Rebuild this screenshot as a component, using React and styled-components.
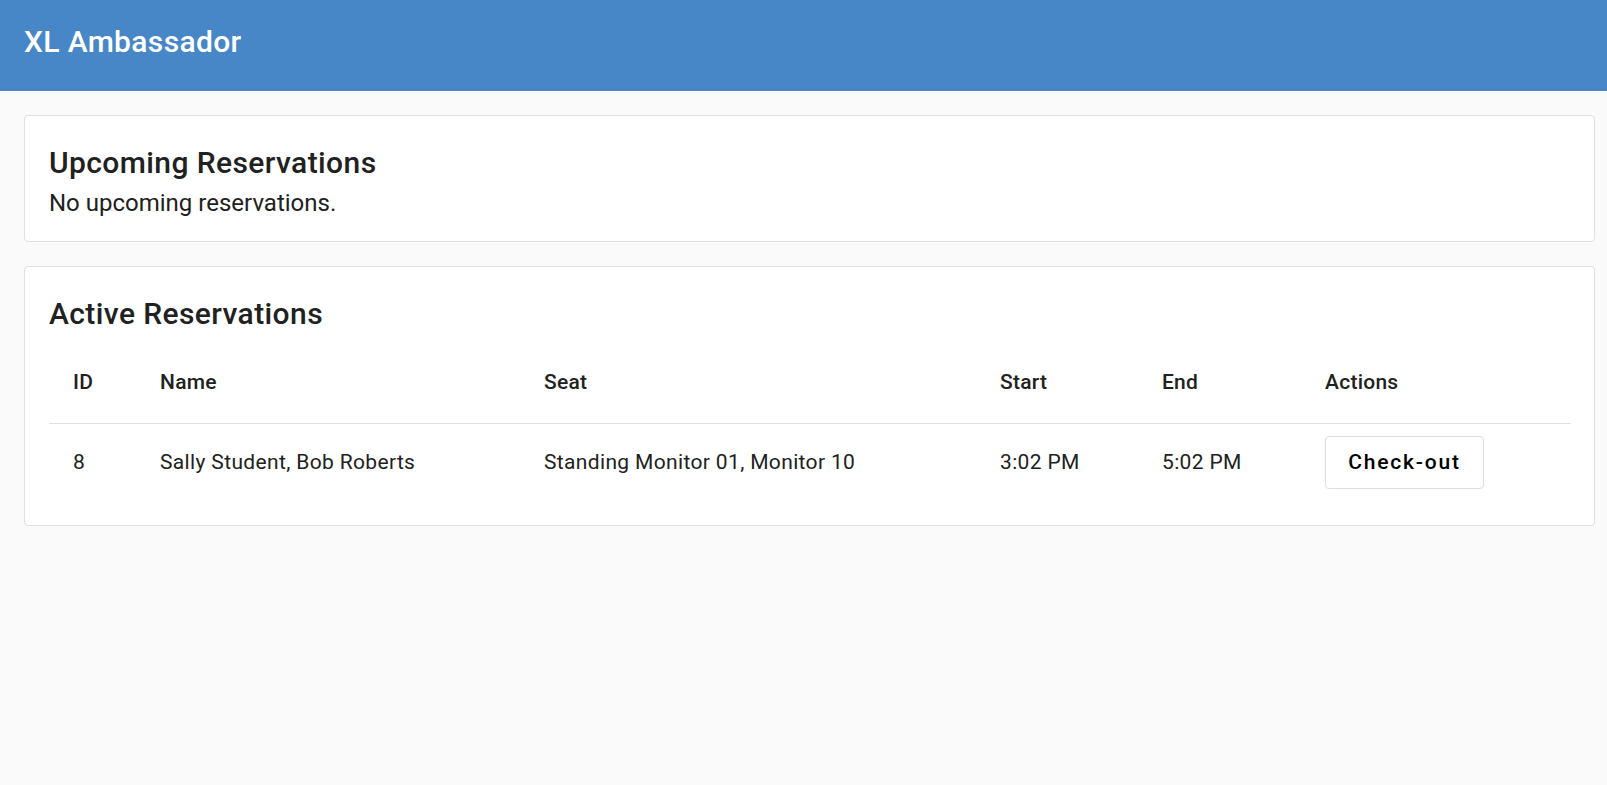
import React from "react";
import styled, { createGlobalStyle } from "styled-components";

const GlobalStyle = createGlobalStyle`
  html, body { margin: 0; padding: 0; background: #fafafa; }
  body { font-family: Roboto, "Noto Sans", Arial, sans-serif; color: rgba(0,0,0,0.87); }
  * { box-sizing: border-box; }
`;

const Page = styled.div`
  min-height: 785px;
  background: #fafafa;
`;

const AppBar = styled.header`
  height: 91px;
  background: #4787c7;
  padding: 18px 24px 0;
`;

const Brand = styled.h1`
  margin: 0;
  font-size: 30px;
  line-height: 48px;
  font-weight: 500;
  letter-spacing: 0.35px;
  color: #ffffff;
`;

const Main = styled.main`
  padding: 24px 12px 24px 24px;
  display: flex;
  flex-direction: column;
  gap: 24px;
`;

const Card = styled.section`
  background: #ffffff;
  border: 1px solid #e0e0e0;
  border-radius: 4px;
  padding: 25px 24px 20px;
`;

const CardTitle = styled.h2`
  margin: 0 0 ${(p) => p.$gap || 0}px;
  font-size: 30px;
  line-height: 44px;
  font-weight: 500;
  letter-spacing: 0.4px;
  color: #212121;
`;

const Body = styled.p`
  margin: 0;
  font-size: 24px;
  line-height: 36px;
  letter-spacing: 0;
  color: #212121;
`;

const Table = styled.table`
  width: 100%;
  border-collapse: collapse;
  table-layout: fixed;
  margin-bottom: 3px;
`;

const HeadCell = styled.th`
  height: 81px;
  padding: 0 24px 1px;
  text-align: left;
  font-size: 21px;
  line-height: 30px;
  font-weight: 500;
  letter-spacing: 0.25px;
  color: #212121;
  border-bottom: 1px solid #e0e0e0;
  vertical-align: middle;
`;

const Cell = styled.td`
  height: 79px;
  padding: 0 24px 1px;
  font-size: 21px;
  line-height: 30px;
  font-weight: 400;
  letter-spacing: 0.35px;
  color: #212121;
  vertical-align: middle;
`;

const Button = styled.button`
  display: block;
  height: 53px;
  width: 159px;
  padding: 0;
  background: #ffffff;
  border: 1px solid #dedede;
  border-radius: 4px;
  font-family: Roboto, "Noto Sans", Arial, sans-serif;
  font-size: 21px;
  font-weight: 500;
  letter-spacing: 1.8px;
  color: #000000;
  cursor: pointer;
`;

const columns = [
  { key: "id", label: "ID", width: 87 },
  { key: "name", label: "Name", width: 384 },
  { key: "seat", label: "Seat", width: 456 },
  { key: "start", label: "Start", width: 162 },
  { key: "end", label: "End", width: 163 },
  { key: "actions", label: "Actions", width: 270 },
];

const rows = [
  {
    id: 8,
    name: "Sally Student, Bob Roberts",
    seat: "Standing Monitor 01, Monitor 10",
    start: "3:02 PM",
    end: "5:02 PM",
  },
];

export default function App() {
  return (
    <Page>
      <GlobalStyle />
      <AppBar>
        <Brand>XL Ambassador</Brand>
      </AppBar>
      <Main>
        <Card>
          <CardTitle>Upcoming Reservations</CardTitle>
          <Body>No upcoming reservations.</Body>
        </Card>
        <Card>
          <CardTitle $gap={6}>Active Reservations</CardTitle>
          <Table>
            <colgroup>
              {columns.map((c) => (
                <col key={c.key} style={{ width: c.width }} />
              ))}
            </colgroup>
            <thead>
              <tr>
                {columns.map((c) => (
                  <HeadCell key={c.key}>{c.label}</HeadCell>
                ))}
              </tr>
            </thead>
            <tbody>
              {rows.map((r) => (
                <tr key={r.id}>
                  <Cell>{r.id}</Cell>
                  <Cell>{r.name}</Cell>
                  <Cell>{r.seat}</Cell>
                  <Cell>{r.start}</Cell>
                  <Cell>{r.end}</Cell>
                  <Cell>
                    <Button>Check-out</Button>
                  </Cell>
                </tr>
              ))}
            </tbody>
          </Table>
        </Card>
      </Main>
    </Page>
  );
}
